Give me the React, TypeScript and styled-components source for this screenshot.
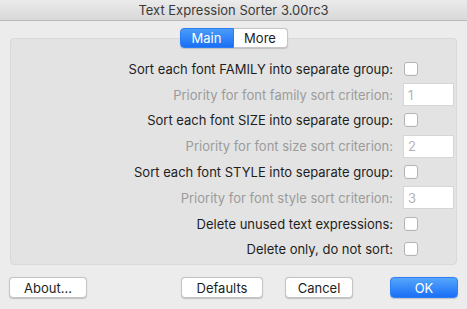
import React from "react";
import styled, { createGlobalStyle } from "styled-components";

const GlobalStyle = createGlobalStyle`
  html, body {
    margin: 0;
    padding: 0;
    background: #ececec;
  }
  body {
    font-family: Inter, "Liberation Sans", Arial, sans-serif;
    font-size: 13px;
    color: #1e1e1e;
  }
`;

type Row =
  | { kind: "check"; label: string }
  | { kind: "priority"; label: string; value: string };

const ROWS: Row[] = [
  { kind: "check", label: "Sort each font FAMILY into separate group:" },
  { kind: "priority", label: "Priority for font family sort criterion:", value: "1" },
  { kind: "check", label: "Sort each font SIZE into separate group:" },
  { kind: "priority", label: "Priority for font size sort criterion:", value: "2" },
  { kind: "check", label: "Sort each font STYLE into separate group:" },
  { kind: "priority", label: "Priority for font style sort criterion:", value: "3" },
  { kind: "check", label: "Delete unused text expressions:" },
  { kind: "check", label: "Delete only, do not sort:" },
];

function App() {
  return (
    <Window>
      <GlobalStyle />
      <TitleBar>Text Expression Sorter 3.00rc3</TitleBar>

      <TabRow>
        <Tab $active>Main</Tab>
        <Tab>More</Tab>
      </TabRow>

      <Panel>
        <Form>
          {ROWS.map((row) => (
            <React.Fragment key={row.label}>
              <Label $disabled={row.kind === "priority"}>{row.label}</Label>
              {row.kind === "check" ? (
                <Checkbox />
              ) : (
                <Field>{row.value}</Field>
              )}
            </React.Fragment>
          ))}
        </Form>
      </Panel>

      <Footer>
        <Button $width={78}>About...</Button>
        <Spacer />
        <Button $width={82}>Defaults</Button>
        <Button $width={68} style={{ marginLeft: 22 }}>
          Cancel
        </Button>
        <Button $width={68} $primary style={{ marginLeft: 37 }}>
          OK
        </Button>
      </Footer>
    </Window>
  );
}

export default App;

// Style
const Window = styled.div`
  width: 467px;
  height: 309px;
  display: flex;
  flex-direction: column;
  background: #ececec;
  overflow: hidden;
`;

const TitleBar = styled.div`
  height: 20px;
  display: flex;
  align-items: center;
  justify-content: center;
  background: linear-gradient(#ebebeb, #d8d8d8);
  border-bottom: 1px solid #b9b9b9;
  color: #3a3a3a;
  font-size: 13px;
`;

const TabRow = styled.div`
  display: flex;
  justify-content: center;
  margin-top: 7px;
  position: relative;
  z-index: 1;
  height: 20px;
`;

const Tab = styled.div<{ $active?: boolean }>`
  width: 54px;
  height: 20px;
  box-sizing: border-box;
  display: flex;
  align-items: center;
  justify-content: center;
  font-size: 13px;
  color: ${(p) => (p.$active ? "#ffffff" : "#1e1e1e")};
  background: ${(p) =>
    p.$active ? "linear-gradient(#4a9cf8, #1a6ff5)" : "#ffffff"};
  border: 1px solid ${(p) => (p.$active ? "#2a7df5" : "#c6c6c6")};
  border-left-width: ${(p) => (p.$active ? "1px" : "0")};
  border-radius: ${(p) => (p.$active ? "4px 0 0 4px" : "0 4px 4px 0")};
  box-shadow: 0 0.5px 1px rgba(0, 0, 0, 0.15);
`;

const Panel = styled.div`
  margin: -10px 10px 0 10px;
  height: 227px;
  box-sizing: border-box;
  background: #e3e3e3;
  border: 1px solid #d9d9d9;
  border-radius: 4px;
  padding: 17px 2px 0 0;
`;

const Form = styled.div`
  display: grid;
  grid-template-columns: 1fr 51px;
  grid-auto-rows: 25.8px;
  column-gap: 10px;
  align-items: center;
`;

const Label = styled.div<{ $disabled?: boolean }>`
  text-align: right;
  white-space: nowrap;
  font-size: 13px;
  color: ${(p) => (p.$disabled ? "#9b9b9b" : "#1e1e1e")};
`;

const Checkbox = styled.div`
  width: 14px;
  height: 14px;
  margin-left: 1px;
  box-sizing: border-box;
  background: #ffffff;
  border: 1px solid #b4b4b4;
  border-radius: 3px;
  box-shadow: inset 0 -0.5px 0 rgba(0, 0, 0, 0.05);
`;

const Field = styled.div`
  width: 51px;
  height: 23px;
  box-sizing: border-box;
  display: flex;
  align-items: center;
  padding-left: 4px;
  background: #ffffff;
  border: 1px solid #d6d6d6;
  color: #b4b4b4;
  font-size: 13px;
`;

const Footer = styled.div`
  display: flex;
  align-items: center;
  margin-top: 12px;
  padding: 0 9px 0 9px;
`;

const Spacer = styled.div`
  flex: 1;
`;

const Button = styled.div<{ $width: number; $primary?: boolean }>`
  width: ${(p) => p.$width}px;
  height: 21px;
  box-sizing: border-box;
  display: flex;
  align-items: center;
  justify-content: center;
  font-size: 13px;
  border-radius: 4px;
  color: ${(p) => (p.$primary ? "#ffffff" : "#1e1e1e")};
  background: ${(p) =>
    p.$primary ? "linear-gradient(#55a6fb, #1a6ff6)" : "#ffffff"};
  border: 1px solid ${(p) => (p.$primary ? "#2d7ff6" : "#c4c4c4")};
  box-shadow: 0 0.5px 1px rgba(0, 0, 0, 0.18);
`;
